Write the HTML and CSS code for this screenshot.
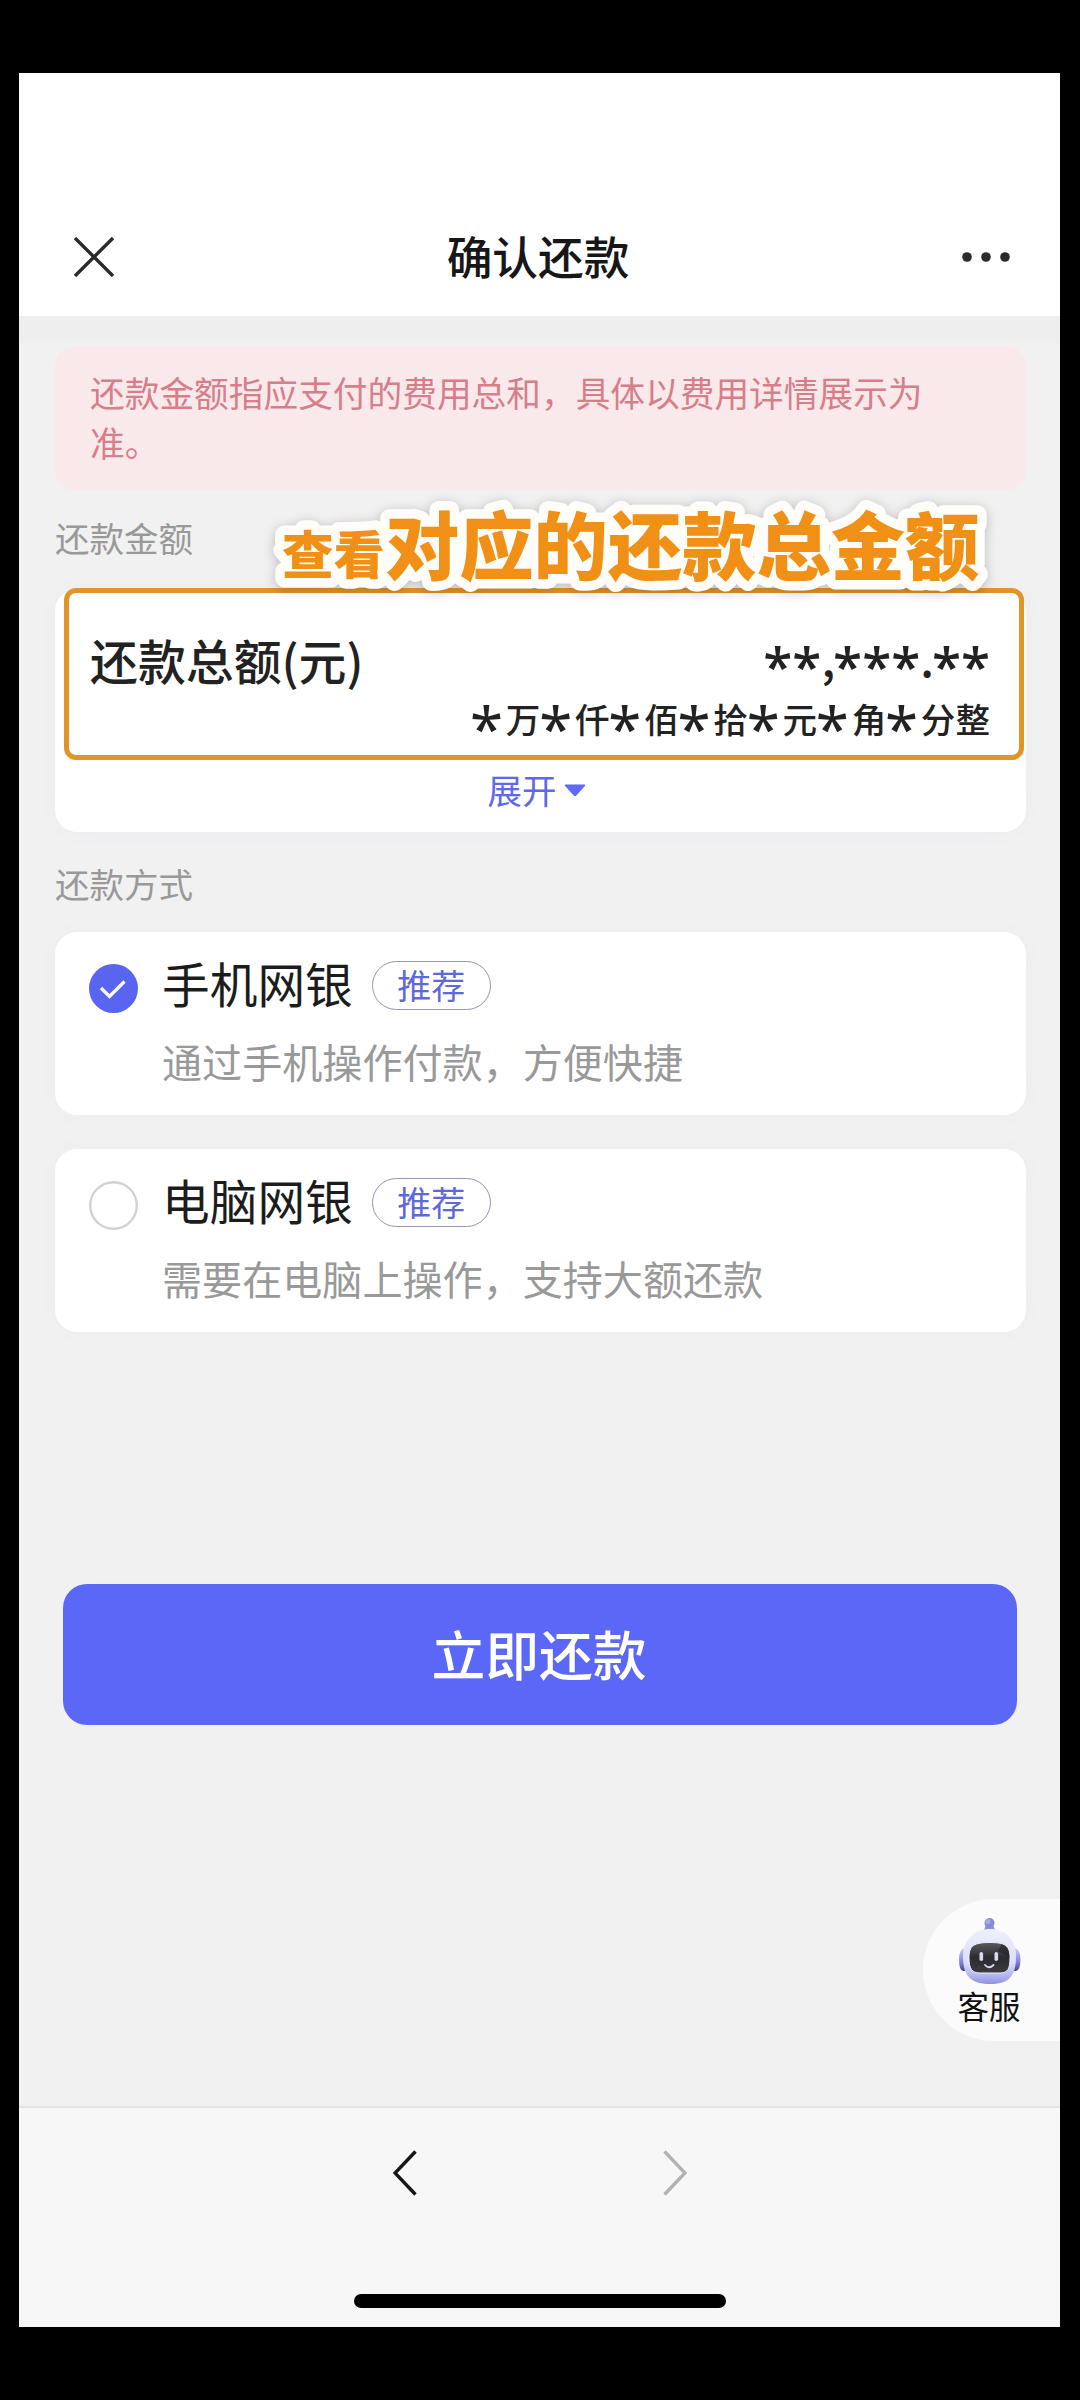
FILE: index.html
```html
<!DOCTYPE html>
<html lang="zh-CN">
<head>
<meta charset="utf-8">
<title>确认还款</title>
<link rel="stylesheet" href="styles.css">
</head>
<body>
<div class="screen">
  <header class="header">
    <svg class="close" viewBox="0 0 40 40"><path d="M1 1 39 39M39 1 1 39"/></svg>
    <h1 class="title">确认还款</h1>
    <svg class="more" viewBox="0 0 48 12"><circle cx="5" cy="6" r="4.8"/><circle cx="24" cy="6" r="4.8"/><circle cx="43" cy="6" r="4.8"/></svg>
  </header>
  <main class="content">
    <div class="notice">还款金额指应支付的费用总和，具体以费用详情展示为准。</div>
    <h2 class="label label-amount">还款金额</h2>
    <section class="card total">
      <div class="highlight"></div>
      <svg class="callout" viewBox="0 0 740 110">
        <text class="callout-small" x="20" y="84">查看</text>
        <text class="callout-large" x="123" y="84">对应的还款总金额</text>
      </svg>
      <div class="total-row">
        <span class="total-name">还款总额(元)</span>
        <span class="amount"><i>**</i><b>,</b><i>***</i><b>.</b><i>**</i></span>
      </div>
      <div class="capital"><i>*</i>万<i>*</i>仟<i>*</i>佰<i>*</i>拾<i>*</i>元<i>*</i>角<i>*</i>分整</div>
      <div class="expand">展开<svg class="caret" viewBox="0 0 22 13"><path d="M1.5.5h19q1.4.4.4 1.5l-8.600 9.600q-1.300 1-2.600 0L1.100 2Q.1.900 1.500.5z"/></svg></div>
    </section>
    <h2 class="label label-method">还款方式</h2>
    <section class="card method">
      <svg class="radio" viewBox="0 0 49 49"><circle cx="24.500" cy="24.500" r="24.500" fill="#5965f0"/><path d="m12 24 8.500 8.500L35.500 17.500" fill="none" stroke="#fff" stroke-width="3.200"/></svg>
      <div class="method-body">
        <div class="method-row"><span class="method-name">手机网银</span><span class="tag">推荐</span></div>
        <p class="desc">通过手机操作付款，方便快捷</p>
      </div>
    </section>
    <section class="card method">
      <svg class="radio" viewBox="0 0 49 49"><circle cx="24.500" cy="24.500" r="23.300" fill="#fff" stroke="#d2d2d2" stroke-width="2.400"/></svg>
      <div class="method-body">
        <div class="method-row"><span class="method-name">电脑网银</span><span class="tag">推荐</span></div>
        <p class="desc">需要在电脑上操作，支持大额还款</p>
      </div>
    </section>
    <button class="submit">立即还款</button>
    <aside class="service">
      <svg class="robot" viewBox="0 0 64 70">
        <defs>
          <linearGradient id="head" x1="0" y1="0" x2="0" y2="1"><stop offset="0" stop-color="#eeeffb"/><stop offset=".6" stop-color="#dedffa"/><stop offset=".85" stop-color="#b3b5f0"/><stop offset="1" stop-color="#8f91e3"/></linearGradient>
          <linearGradient id="ear" x1="0" y1="0" x2="0" y2="1"><stop offset="0" stop-color="#c9cbf8"/><stop offset=".6" stop-color="#8285dd"/><stop offset="1" stop-color="#4a4a85"/></linearGradient>
          <linearGradient id="face" x1="0" y1="0" x2="0" y2="1"><stop offset="0" stop-color="#5a5a60"/><stop offset=".5" stop-color="#2b2b2f"/><stop offset="1" stop-color="#3c3c40"/></linearGradient>
        </defs>
        <path d="M27.500 9h8l2 5.500q-6 2-12 0z" fill="#8f90da"/>
        <circle cx="31.500" cy="6" r="5" fill="#8789d4"/><circle cx="30" cy="4.500" r="2.500" fill="#a9abe6"/>
        <path d="M7 31q-6 1-6 11.500T5 54h4V31zM56 31q6.500 1 6.500 11.500T58 54h-4V31z" fill="url(#ear)"/>
        <path d="M32 12C47 12 58 22 58 39c0 18-5 28-26 28S5 57 5 39C5 22 17 12 32 12z" fill="url(#head)"/>
        <path d="M32 25.500c15 0 20 3 20 15 0 11-2 15.500-10 15.500H22c-8 0-11-4-11-15.500 0-12 5-15 21-15z" fill="url(#face)" stroke="#eef" stroke-width="1"/>
        <path d="M44 27q7 3 7.500 13L40 34z" fill="#222" opacity=".6"/>
        <rect x="21.500" y="35" width="3.600" height="9" rx="1.800" fill="#d8d9f2"/><rect x="36.500" y="35" width="3.600" height="9" rx="1.800" fill="#d8d9f2"/>
        <path d="M27 48q4 4.500 8.500 0" fill="none" stroke="#d8d9f2" stroke-width="1.800" stroke-linecap="round"/>
      </svg>
      <span class="service-text">客服</span>
    </aside>
  </main>
  <footer class="footer">
    <nav class="nav">
      <svg class="chevron" viewBox="0 0 24 46"><path d="M22.500 1.500 2 23l20.500 21.500" stroke="#171717"/></svg>
      <svg class="chevron" viewBox="0 0 24 46"><path d="M1.500 1.500 22 23 1.500 44.500" stroke="#b2b2b2"/></svg>
    </nav>
    <div class="home"></div>
  </footer>
</div>
</body>
</html>
```
FILE: styles.css
```css
* { box-sizing: border-box; margin: 0; padding: 0; }
body {
  width: 1080px; height: 2400px; padding: 73px 20px 73px 19px;
  background: #000; color: #222; overflow: hidden;
  font-family: "Noto Sans CJK SC", sans-serif; font-weight: 400;
}
svg { display: block; flex: none; }
.screen { height: 2254px; display: flex; flex-direction: column; background: #f1f1f1; }

.header {
  height: 243px; padding: 126px 50px 0 55px; background: #fff;
  display: flex; justify-content: space-between; align-items: flex-start;
}
.close { width: 40px; height: 40px; margin-top: 38px; fill: none; stroke: #2b2b2b; stroke-width: 3.4; }
.title { font-size: 45.7px; line-height: 60px; font-weight: 500; margin: 26px 0 0 0; color: #171717; }
.more { width: 48px; height: 12px; margin-top: 52px; fill: #2b2b2b; }

.content { height: 1790px; padding: 30px 34px 0 36px; background: linear-gradient(#eee 0, #eee 24px, #f1f1f1 30px); }
.notice {
  height: 144px; padding: 21px 80px 0 35px; border-radius: 20px;
  background: #fae9ea; color: #d67e8a; font-size: 34.7px; line-height: 50.4px;
}
.label { height: 50px; font-size: 34.5px; line-height: 50px; font-weight: 400; color: #999; }
.label-amount { margin-top: 22px; }
.label-method { margin-top: 26px; }
.card { border-radius: 22px; background: #fff; box-shadow: 0 0 26px rgba(90, 90, 240, .025); }

.total { position: relative; height: 243px; margin-top: 27px; padding: 38px 36px 0 35px; }
.highlight {
  position: absolute; left: 9px; top: -1px; width: 960px; height: 172px;
  border: 5px solid #e29428; border-radius: 12px;
}
.callout {
  position: absolute; left: 207px; top: -99.5px; width: 740px; height: 110px; overflow: visible;
  font-weight: 900; fill: #f09016; stroke: #fffdf9; stroke-width: 19px;
  stroke-linejoin: round; paint-order: stroke fill;
  filter: drop-shadow(0 2px 6px rgba(0, 0, 0, .22));
}
.callout-small { font-size: 51.6px; }
.callout-large { font-size: 74.3px; }
.total-row { height: 64px; display: flex; justify-content: space-between; line-height: 64px; }
.total-name { font-size: 47.9px; font-weight: 500; }
.amount { margin-top: -2px; font-size: 46px; font-weight: 500; }
.amount i { font: normal 600 53px/1px "Open Sans", "Noto Sans", sans-serif; vertical-align: -9px; }
.amount b { font-weight: 500; letter-spacing: -2px; }
.capital { height: 50px; margin-top: 2px; font-size: 34.6px; line-height: 50px; text-align: right; font-weight: 500; }
.capital i {
  display: inline-block; width: 34.6px; margin: 0 2px 0 -2px; text-align: center;
  font: normal 400 60px/1px "Noto Sans", sans-serif; vertical-align: -18px;
}
.expand {
  height: 50px; margin: 21px 0 0 0; padding-right: 7px; display: flex; justify-content: center; align-items: center; gap: 7px;
  font-size: 34.5px; line-height: 50px; color: #6068e8;
}
.caret { width: 22px; height: 13px; margin-top: 2px; fill: #5f69f2; }

.method { height: 183px; display: flex; padding: 32px 34px 0; gap: 24px; }
.label-method + .method { margin-top: 24px; }
.method + .method { margin-top: 34px; }
.radio { width: 49px; height: 49px; }
.method-row { height: 48px; display: flex; align-items: center; gap: 19px; margin-top: -3px; }
.method-name { font-size: 47.7px; line-height: 48px; margin-top: -5px; color: #1c1c1c; }
.tag {
  width: 119px; height: 49px; border: 1.5px solid #9295b8; border-radius: 25px;
  font-size: 34px; line-height: 45px; text-align: center; color: #6068d8;
}
.desc { margin-top: 22px; font-size: 40.1px; line-height: 60px; color: #999; }

.submit {
  display: block; width: 954px; height: 141px; margin: 252px 0 0 8px; padding: 0 2px 4px 0; border: 0; border-radius: 24px;
  background: #5b67f6; color: #fff; font: 500 53.8px/137px "Noto Sans CJK SC", sans-serif;
}
.service {
  width: 137px; height: 142px; margin: 174px -34px 0 auto; padding: 18px 3px 0 0;
  border-radius: 71px 0 0 71px; background: #fbfbfc;
  display: flex; flex-direction: column; align-items: center;
}
.robot { width: 64px; height: 70px; }
.service-text { margin: -2px 2px 0 0; font-size: 31.5px; line-height: 40px; color: #111; }

.footer { flex: 1; border-top: 2px solid #e4e4e4; background: #f7f7f7; display: flex; flex-direction: column; align-items: center; }
.nav { display: flex; gap: 246px; padding-top: 42px; }
.chevron { width: 24px; height: 46px; fill: none; }
.chevron path { stroke-width: 3.4; }
.home { width: 372px; height: 14px; margin-top: 98px; border-radius: 7px; background: #000; }
```
